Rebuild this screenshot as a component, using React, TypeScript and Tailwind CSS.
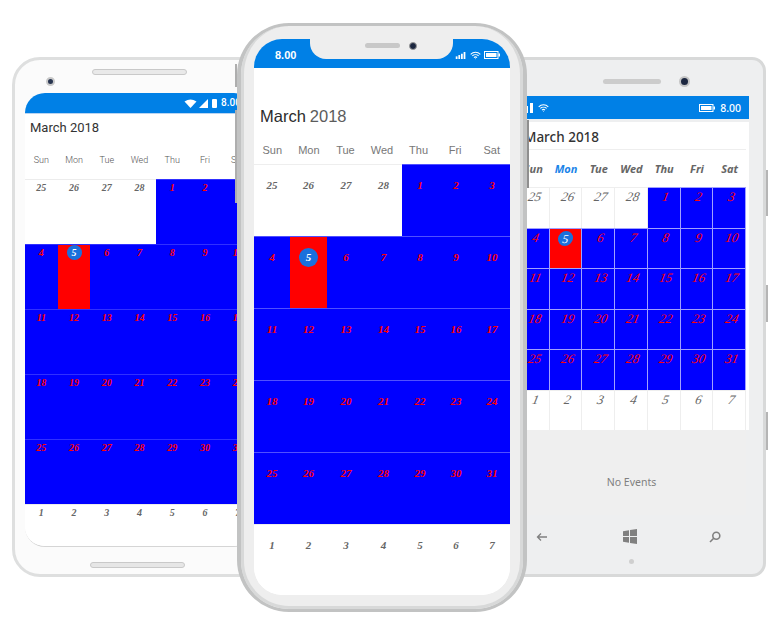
const weeks = [
  [25, 26, 27, 28, 1, 2, 3],
  [4, 5, 6, 7, 8, 9, 10],
  [11, 12, 13, 14, 15, 16, 17],
  [18, 19, 20, 21, 22, 23, 24],
  [25, 26, 27, 28, 29, 30, 31],
  [1, 2, 3, 4, 5, 6, 7],
];
const dayNames = ["Sun", "Mon", "Tue", "Wed", "Thu", "Fri", "Sat"];

type GridProps = {
  colsClass: string;
  rowClass: string;
  lastRowClass: string;
  cellClass: string;
  lineClass: string;
  plainLineClass: string;
  textClass: string;
  todayClass: string;
};

function MonthGrid({ colsClass, rowClass, lastRowClass, cellClass, lineClass, plainLineClass, textClass, todayClass }: GridProps) {
  return (
    <div className="flex flex-col">
      {weeks.map((week, r) => (
        <div key={r} className={`grid ${colsClass} ${r === 5 ? lastRowClass : rowClass}`}>
          {week.map((d, c) => {
            const inMonth = !((r === 0 && d > 20) || r === 5);
            const today = r === 1 && c === 1;
            return (
              <div
                key={c}
                className={`flex justify-center ${cellClass} ${inMonth ? lineClass : plainLineClass} ${
                  today ? "bg-[#ff0000]" : inMonth ? "bg-[#0000ff]" : "bg-white"
                }`}
              >
                {today ? (
                  <span className={`flex items-center justify-center rounded-full bg-[#1a70dc] text-white ${todayClass}`}>{d}</span>
                ) : (
                  <span className={`${textClass} ${inMonth ? "text-[#ff0000]" : "text-[#666666]"}`}>{d}</span>
                )}
              </div>
            );
          })}
        </div>
      ))}
    </div>
  );
}

function Wifi({ className }: { className: string }) {
  return (
    <svg viewBox="0 0 16 12" className={className} fill="none" stroke="white" strokeWidth="1.5">
      <path d="M1 4.2a10 10 0 0 1 14 0" />
      <path d="M3.4 6.7a6.6 6.6 0 0 1 9.2 0" />
      <path d="M5.8 9a3.2 3.2 0 0 1 4.4 0" />
      <circle cx="8" cy="10.8" r="0.7" fill="white" stroke="none" />
    </svg>
  );
}

function Battery({ className }: { className: string }) {
  return (
    <svg viewBox="0 0 16 8" className={className}>
      <rect x="0.5" y="0.5" width="13.5" height="7" fill="none" stroke="white" />
      <rect x="2" y="2" width="10.5" height="4" fill="white" />
      <rect x="14.5" y="2.5" width="1.5" height="3" fill="white" />
    </svg>
  );
}

function LeftPhone() {
  return (
    <div className="absolute left-[12px] top-[57px] h-[520px] w-[255px] rounded-[28px] border-[3px] border-[#dedfdf] bg-[#fbfbfb]">
      <div className="flex h-[33px] items-end justify-center pb-[18px]">
        <div className="relative h-[6px] w-[95px] rounded-full border border-[#c9c9c9] bg-[#e9e9e9]">
          <span className="absolute left-[-47px] top-[7px] h-[9px] w-[9px] rounded-full border-2 border-[#c9c9c9] bg-[#27344f]" />
        </div>
      </div>
      <div className="ml-[10px] w-[229px] overflow-hidden rounded-b-[20px] rounded-t-[20px] border-b border-[#d5d5d5] bg-white">
        <div className="flex h-[21px] items-center gap-[2px] border-b border-[#b8d4f2] bg-[#0080e6] pl-[159px]">
          <svg viewBox="0 0 12 9" className="h-[9px] w-[13px] shrink-0">
            <path d="M0 2.5Q6 -1.5 12 2.5L6 9Z" fill="white" />
          </svg>
          <svg viewBox="0 0 9 9" className="h-[9px] w-[9px] shrink-0">
            <path d="M9 0V9H0Z" fill="white" />
          </svg>
          <span className="ml-[2px] h-[9px] w-[5px] shrink-0 rounded-[1px] bg-white" />
          <span className="ml-[2px] shrink-0 font-['Roboto',sans-serif] text-[10px] font-medium leading-[12px] text-white">8.00</span>
        </div>
        <div className="h-[34px] pl-[5px] pt-[4px] font-['Roboto',sans-serif] text-[13px] leading-[20px] text-[#333333]">March 2018</div>
        <div className="grid h-[31px] grid-cols-7 pt-[5px] font-['Roboto',sans-serif] text-[9px] font-light leading-[15px] text-[#555555]">
          {dayNames.map((n) => (
            <span key={n} className="text-center">{n}</span>
          ))}
        </div>
        <MonthGrid
          colsClass="grid-cols-7"
          rowClass="h-[65px]"
          lastRowClass="h-[42px]"
          cellClass="pt-[1px]"
          lineClass="border-t border-[#3030ff]"
          plainLineClass="border-t border-[#ececec]"
          textClass="font-['Liberation_Serif',serif] text-[10px] italic font-bold leading-[13px]"
          todayClass="-mt-[1px] h-[15px] w-[15px] font-['Liberation_Serif',serif] text-[10px] italic font-bold"
        />
      </div>
      <div className="ml-[75px] mt-[15px] h-[6px] w-[95px] rounded-full border border-[#c9c9c9] bg-[#e6e6e6]" />
    </div>
  );
}

function CenterPhone() {
  return (
    <div className="absolute left-[237px] top-[23px] h-[589px] w-[290px] rounded-[52px] border-x-4 border-b-[3px] border-t-[3px] border-[#c2c3c3] bg-[#eeeeee]">
      <div className="h-full rounded-[48px] border-x-[3px] border-b-[3px] border-[#d8d9d9] px-[10px] pb-[11px] pt-[13px]">
        <div className="relative h-[556px] w-[256px] overflow-hidden rounded-[28px] bg-white">
          <div className="flex h-[29px] items-center justify-between bg-[#0080e6] pl-[21px] pr-[10px] pt-[3px]">
            <span className="font-['Liberation_Sans',sans-serif] text-[11px] font-bold leading-[14px] text-white">8.00</span>
            <div className="flex items-center gap-[3px]">
              <svg viewBox="0 0 12 8" className="h-[7px] w-[12px]" fill="white">
                <rect x="0" y="5" width="2" height="3" />
                <rect x="3" y="3.5" width="2" height="4.5" />
                <rect x="6" y="2" width="2" height="6" />
                <rect x="9" y="0" width="2" height="8" />
              </svg>
              <Wifi className="h-[9px] w-[11px]" />
              <Battery className="h-[8px] w-[16px]" />
            </div>
          </div>
          <div className="absolute left-[56px] top-0 flex h-[20px] w-[143px] items-start justify-center gap-[9px] rounded-b-[16px] bg-[#eeeeee] pl-[18px] pt-[3px]">
            <span className="mt-px h-[5px] w-[35px] rounded-full bg-[#c8c8c8]" />
            <span className="h-[8px] w-[8px] rounded-full border border-[#9a9a9a] bg-[#1c2740]" />
          </div>
          <div className="flex h-[68px] items-end pb-[10px] pl-[6px] font-['Liberation_Sans',sans-serif] text-[16.5px] leading-[20px]">
            <span className="text-[#2b2b2b]">March</span>
            <span className="ml-[4px] font-light text-[#5c5c5c]">2018</span>
          </div>
          <div className="grid h-[28px] grid-cols-7 items-center font-['Liberation_Sans',sans-serif] text-[11px] text-[#777777]">
            {dayNames.map((n) => (
              <span key={n} className="text-center">{n}</span>
            ))}
          </div>
          <MonthGrid
            colsClass="grid-cols-[36px_37px_38px_37px_36px_36px_36px]"
            rowClass="h-[72px]"
            lastRowClass="h-[71px]"
            cellClass="pt-[13px]"
            lineClass="border-t border-[#5050ff]"
            plainLineClass="border-t border-[#eeeeee]"
            textClass="font-['Liberation_Serif',serif] text-[11px] italic font-bold leading-[14px]"
            todayClass="-mt-[2px] h-[19px] w-[19px] font-['Liberation_Serif',serif] text-[11px] italic font-bold"
          />
        </div>
      </div>
    </div>
  );
}

function RightPhone() {
  return (
    <div className="absolute left-[504px] top-[57px] h-[520px] w-[262px] rounded-[14px] border-[3px] border-[#d8d9d9] bg-[#eeeff0]">
      <div className="flex h-[36px] items-start justify-center pr-[6px] pt-[19px]">
        <div className="relative h-[5px] w-[58px] rounded-full bg-[#cccccc]">
          <span className="absolute left-[76px] top-[-3px] h-[11px] w-[11px] rounded-full border-[2px] border-[#c4c4c4] bg-[#1c2740]" />
        </div>
      </div>
      <div className="ml-[10px] w-[232px]">
        <div className="flex h-[23px] items-center justify-between bg-[#0080e6] pr-[8px]">
          <div className="flex items-center gap-[1px]">
            <svg viewBox="0 0 18 10" className="h-[10px] w-[18px]" fill="white">
              <rect x="5" y="5" width="2" height="5" />
              <rect x="9" y="3" width="2" height="7" />
              <rect x="13" y="0" width="3" height="10" />
            </svg>
            <Wifi className="ml-[2px] h-[10px] w-[11px]" />
          </div>
          <div className="flex items-center gap-[5px]">
            <Battery className="h-[8px] w-[16px]" />
            <span className="font-['Noto_Sans',sans-serif] text-[10.5px] font-medium leading-[14px] text-white">8.00</span>
          </div>
        </div>
        <div className="mt-[3px] bg-white pr-[3px]">
          <div className="flex h-[28px] items-center border-b border-[#eeeeee] pl-[7px] pt-[3px] font-['Noto_Sans',sans-serif] text-[13.5px] font-medium text-[#333333]">
            March 2018
          </div>
          <div className="grid h-[37px] grid-cols-7 items-center pt-[2px] font-['Noto_Sans',sans-serif] text-[11px] font-bold italic text-[#666666]">
            {dayNames.map((n) => (
              <span key={n} className={`text-center ${n === "Mon" ? "text-[#1a84e8]" : ""}`}>{n}</span>
            ))}
          </div>
          <MonthGrid
            colsClass="grid-cols-7"
            rowClass="h-[40.5px]"
            lastRowClass="h-[40.5px]"
            cellClass="pt-[1px] border-r"
            lineClass="border-t border-[#a0a0ff]"
            plainLineClass="border-t border-[#eeeeee]"
            textClass="inline-block -skew-x-12 font-['Liberation_Serif',serif] text-[13px] italic leading-[15px]"
            todayClass="mt-[1px] h-[15px] w-[15px] -skew-x-6 font-['Liberation_Serif',serif] text-[12px] italic"
          />
        </div>
        <div className="flex h-[85px] w-[229px] items-center justify-center bg-[#efefef] pt-[20px] font-['Noto_Sans',sans-serif] text-[10.5px] text-[#808080]">
          No Events
        </div>
      </div>
      <div className="ml-[10px] mt-[14px] flex w-[232px] items-center justify-between pl-[19px] pr-[28px]">
        <svg viewBox="0 0 12 10" className="h-[10px] w-[12px]" fill="none" stroke="#808080" strokeWidth="1.3">
          <path d="M11 5H1.5M5 1.5L1.5 5 5 8.5" />
        </svg>
        <svg viewBox="0 0 14 15" className="ml-[3px] h-[15px] w-[14px]" fill="#808080">
          <path d="M0 2.2L6 1.3V7H0ZM7 1.1L14 0V7H7ZM0 8H6V13.7L0 12.8ZM7 8H14V15L7 13.9Z" />
        </svg>
        <svg viewBox="0 0 12 12" className="h-[12px] w-[12px]" fill="none" stroke="#808080" strokeWidth="1.6">
          <circle cx="7.3" cy="4.7" r="3.5" />
          <path d="M4.7 7.3L1 11" />
        </svg>
      </div>
      <div className="ml-[122px] mt-[15px] h-[5px] w-[5px] rounded-full bg-[#cfcfcf]" />
    </div>
  );
}

export default function App() {
  return (
    <div className="relative h-[635px] w-[780px] overflow-hidden bg-white">
      {/* side buttons of the right phone */}
      <span className="absolute left-[766px] top-[170px] h-[46px] w-[2px] bg-[#b5b5b5]" />
      <span className="absolute left-[766px] top-[285px] h-[37px] w-[2px] bg-[#b5b5b5]" />
      <span className="absolute left-[766px] top-[412px] h-[38px] w-[2px] bg-[#b5b5b5]" />
      <LeftPhone />
      <RightPhone />
      {/* buttons of the middle phone */}
      <span className="absolute left-[235px] top-[64px] h-[23px] w-[2px] bg-[#aeaeae]" />
      <span className="absolute left-[235px] top-[110px] h-[40px] w-[2px] bg-[#aeaeae]" />
      <span className="absolute left-[235px] top-[150px] h-[53px] w-[2px] bg-[#aeaeae]" />
      <span className="absolute left-[527px] top-[120px] h-[68px] w-[2px] bg-[#8f8f8f]" />
      <CenterPhone />
    </div>
  );
}
